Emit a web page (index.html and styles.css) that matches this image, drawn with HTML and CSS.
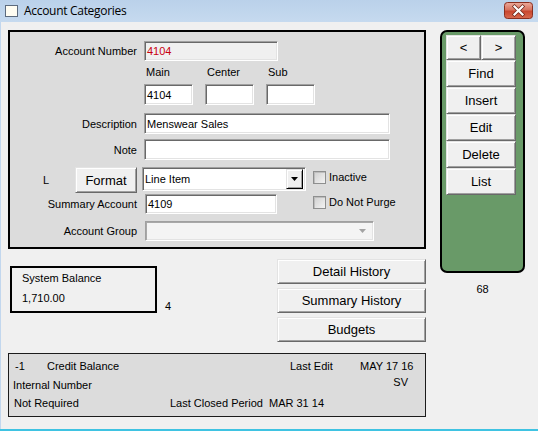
FILE: index.html
```html
<!DOCTYPE html>
<html>
<head>
<meta charset="utf-8">
<title>Account Categories</title>
<link rel="stylesheet" href="styles.css">
</head>
<body>
<div class="window">
  <div class="titlebar">
    <span class="app-icon"></span>
    <span class="title">Account Categories</span>
    <span class="close">
      <svg width="29" height="17" viewBox="0 0 29 17">
        <defs>
          <linearGradient id="cg" x1="0" y1="0" x2="0" y2="1">
            <stop offset="0" stop-color="#ecab9c"/>
            <stop offset="0.45" stop-color="#d7735f"/>
            <stop offset="0.55" stop-color="#c9472f"/>
            <stop offset="1" stop-color="#d86a4f"/>
          </linearGradient>
        </defs>
        <rect x="0.5" y="0.5" width="28" height="16" rx="3" fill="url(#cg)" stroke="#8a2f20"/>
        <path d="M10.5 4.5l8 8M18.5 4.5l-8 8" stroke="#6b2418" stroke-width="3.6" stroke-linecap="square"/>
        <path d="M10.5 4.5l8 8M18.5 4.5l-8 8" stroke="#ffffff" stroke-width="2.2" stroke-linecap="square"/>
      </svg>
    </span>
  </div>
  <div class="client">
    <div class="left">
      <div class="main-panel">
        <div class="row r1">
          <span class="lbl">Account Number</span>
          <span class="field disabled acct">4104</span>
        </div>
        <div class="mcs mcs-labels">
          <span class="mcs-cell">Main</span>
          <span class="mcs-cell">Center</span>
          <span class="mcs-cell">Sub</span>
        </div>
        <div class="mcs mcs-fields">
          <span class="field mcs-cell">4104</span>
          <span class="field mcs-cell"></span>
          <span class="field mcs-cell"></span>
        </div>
        <div class="row r4">
          <span class="lbl">Description</span>
          <span class="field wide">Menswear Sales</span>
        </div>
        <div class="row r5">
          <span class="lbl">Note</span>
          <span class="field wide"></span>
        </div>
        <div class="row r6">
          <span class="fmt-l">L</span>
          <span class="btn fmt-btn">Format</span>
          <span class="combo line-combo">Line Item
            <span class="drop"><svg width="7" height="4" viewBox="0 0 7 4"><path d="M0 0h7L3.5 4z" fill="#000"/></svg></span>
          </span>
          <span class="chk chk-inactive"><span class="box"></span>Inactive</span>
        </div>
        <div class="row r7">
          <span class="lbl">Summary Account</span>
          <span class="field summary">4109</span>
          <span class="chk chk-purge"><span class="box"></span>Do Not Purge</span>
        </div>
        <div class="row r8">
          <span class="lbl">Account Group</span>
          <span class="combo group-combo"><svg width="7" height="4" viewBox="0 0 7 4"><path d="M0 0h7L3.5 4z" fill="#a3a3a3"/></svg></span>
        </div>
      </div>

      <div class="mid">
        <div class="sysbal">
          <div>System Balance</div>
          <div>1,710.00</div>
        </div>
        <span class="four">4</span>
        <div class="hist">
          <span class="btn">Detail History</span>
          <span class="btn">Summary History</span>
          <span class="btn">Budgets</span>
        </div>
      </div>

      <div class="info">
        <div class="info-row ir1">
          <span class="c-neg">-1</span>
          <span class="c-credit">Credit Balance</span>
          <span class="c-edit">Last Edit</span>
          <span>MAY 17 16</span>
        </div>
        <div class="info-row ir2">
          <span class="c-internal">Internal Number</span>
          <span class="c-sv">SV</span>
        </div>
        <div class="info-row ir3">
          <span class="c-notreq">Not Required</span>
          <span class="c-closed">Last Closed Period</span>
          <span>MAR 31 14</span>
        </div>
      </div>
    </div>

    <div class="right">
      <div class="nav">
        <div class="nav-arrows">
          <span class="btn nbtn">&lt;</span>
          <span class="btn nbtn">&gt;</span>
        </div>
        <span class="btn nav-btn">Find</span>
        <span class="btn nav-btn">Insert</span>
        <span class="btn nav-btn">Edit</span>
        <span class="btn nav-btn">Delete</span>
        <span class="btn nav-btn">List</span>
      </div>
      <div class="count">68</div>
    </div>
  </div>
</div>
</body>
</html>
```

FILE: styles.css
```css
* { box-sizing: border-box; }

html, body {
  margin: 0;
  padding: 0;
}

body {
  width: 538px;
  height: 431px;
  overflow: hidden;
  background: #f0f0f0;
  color: #000;
  font-family: "Liberation Sans", Arial, sans-serif;
  font-size: 11px;
}

.window {
  width: 538px;
  height: 431px;
  display: flex;
  flex-direction: column;
  border-bottom: 2px solid #3fc3e2;
}

/* ---------- title bar ---------- */
.titlebar {
  height: 22px;
  flex: none;
  display: flex;
  align-items: flex-start;
  background: linear-gradient(#bad1ea, #c6daef);
  padding-left: 5px;
}

.app-icon {
  width: 13px;
  height: 12px;
  margin-top: 5px;
  background: #fffdf2;
  border: 1px solid #5d6b7d;
}

.title {
  margin-left: 6px;
  margin-top: 2px;
  font-family: "Open Sans", "Noto Sans", sans-serif;
  font-size: 12px;
  letter-spacing: -0.3px;
  line-height: 17px;
}

.close {
  margin-left: auto;
  margin-right: 5px;
  margin-top: 2px;
  width: 29px;
  height: 17px;
  display: flex;
}

/* ---------- client ---------- */
.client {
  flex: 1;
  display: flex;
  gap: 14px;
  padding: 8px 0 0 7px;
  border-left: 1px solid #c2d7ee;
}

.left {
  width: 418px;
  flex: none;
  display: flex;
  flex-direction: column;
}

/* ---------- main panel ---------- */
.main-panel {
  height: 219px;
  border: 2px solid #000;
  background: #dcdcdc;
  padding-top: 9px;
  display: flex;
  flex-direction: column;
}

.row {
  display: flex;
  align-items: center;
}

.lbl {
  width: 127px;
  flex: none;
  text-align: right;
}

.field {
  display: flex;
  align-items: center;
  padding-left: 2px;
  background: #fff;
  border: 1px solid;
  border-color: #a0a0a0 #fff #fff #a0a0a0;
  box-shadow: inset 1px 1px 0 #696969, inset -1px -1px 0 #e3e3e3;
  white-space: nowrap;
  overflow: hidden;
}

.field.disabled { background: #f0f0f0; }

.r1 { height: 20px; }
.r1 .field { height: 20px; }
.acct { margin-left: 7px; width: 134px; color: #c8000f; }

.mcs {
  display: flex;
  gap: 12px;
  margin-left: 134px;
}

.mcs-cell { width: 49px; flex: none; }

.mcs-labels {
  height: 23px;
  line-height: 23px;
}
.mcs-labels .mcs-cell { padding-left: 2px; }

.mcs-fields { height: 21px; }
.mcs-fields .field { height: 21px; }

.r4 { margin-top: 8px; height: 21px; }
.r5 { margin-top: 5px; height: 21px; }
.wide { margin-left: 7px; width: 246px; height: 21px; }

.r6 {
  margin-top: 7px;
  height: 26px;
  align-items: flex-start;
}

.fmt-l {
  width: 32px;
  margin-left: 33px;
  line-height: 26px;
}

.btn {
  display: flex;
  align-items: center;
  justify-content: center;
  background: #f0f0f0;
  border: 1px solid;
  border-color: #e3e3e3 #696969 #696969 #e3e3e3;
  box-shadow: inset 1px 1px 0 #fff, inset -1px -1px 0 #a0a0a0;
  font-size: 13px;
  white-space: nowrap;
}

.fmt-btn {
  width: 62px;
  height: 26px;
}

.combo {
  display: flex;
  align-items: center;
  border: 1px solid;
  border-color: #a0a0a0 #fff #fff #a0a0a0;
  box-shadow: inset 1px 1px 0 #696969, inset -1px -1px 0 #e3e3e3;
}

.line-combo {
  margin-left: 5px;
  width: 164px;
  height: 24px;
  background: #fff;
  padding: 2px 2px 2px 2px;
}

.drop {
  margin-left: auto;
  width: 17px;
  height: 20px;
  display: flex;
  align-items: center;
  justify-content: center;
  background: #f0f0f0;
  border: 1px solid;
  border-color: #e3e3e3 #000 #000 #e3e3e3;
  box-shadow: inset 1px 1px 0 #fff, inset -1px -1px 0 #a0a0a0;
}

.chk {
  display: flex;
  align-items: center;
  gap: 3px;
  line-height: 13px;
}

.box {
  width: 13px;
  height: 13px;
  flex: none;
  border: 1px solid #8e8f8f;
  background: linear-gradient(135deg, #cfcfcf, #f3f3f3);
  box-shadow: inset 1px 1px 0 #bdbdbd;
}

.chk-inactive { margin-left: 7px; margin-top: 4px; }

.r7 {
  margin-top: 1px;
  height: 20px;
  align-items: flex-start;
}
.r7 .lbl { line-height: 20px; }
.summary { margin-left: 8px; width: 132px; height: 20px; }
.chk-purge { margin-left: 36px; margin-top: 2px; }

.r8 { margin-top: 7px; height: 20px; }
.group-combo {
  margin-left: 8px;
  width: 229px;
  height: 20px;
  background: #f4f4f4;
  border-color: #a0a0a0 #fff #fff #a0a0a0;
  box-shadow: inset 1px 1px 0 #a8a8a8, inset -1px -1px 0 #e3e3e3;
  justify-content: flex-end;
  padding-right: 7px;
}

/* ---------- middle section ---------- */
.mid {
  display: flex;
  align-items: flex-start;
  margin-top: 10px;
  height: 84px;
}

.sysbal {
  margin-top: 7px;
  margin-left: 2px;
  width: 147px;
  height: 47px;
  border: 2px solid #000;
  padding-left: 10px;
  line-height: 20px;
}

.four {
  margin-left: 8px;
  margin-top: 41px;
  line-height: 13px;
}

.hist {
  margin-left: auto;
  width: 149px;
  display: flex;
  flex-direction: column;
  gap: 4px;
}
.hist .btn { height: 25px; }

/* ---------- info panel ---------- */
.info {
  margin-top: 10px;
  height: 64px;
  border: 1px solid #1c1c1c;
  background: #dcdcdc;
  padding-top: 4px;
}

.info-row {
  display: flex;
  align-items: flex-start;
  line-height: 16px;
  white-space: nowrap;
}

.ir1 { height: 16px; padding-left: 6px; }
.c-neg { width: 32px; }
.c-credit { width: 243px; }
.c-edit { width: 70px; }

.ir2 { height: 19px; }
.c-internal { margin-left: 4px; margin-top: 3px; }
.c-sv { margin-left: auto; margin-right: 17px; }

.ir3 { margin-top: 2px; height: 16px; }
.c-notreq { margin-left: 5px; width: 156px; }
.c-closed { width: 99px; }

/* ---------- right nav panel ---------- */
.right {
  width: 85px;
  flex: none;
  display: flex;
  flex-direction: column;
}

.nav {
  height: 243px;
  border: 2px solid #000;
  border-radius: 7px;
  background: #699a68;
  padding: 3px 7px 0 4px;
  display: flex;
  flex-direction: column;
}

.nav-arrows {
  display: flex;
  height: 25px;
}

.nbtn { width: 35px; height: 25px; }

.nav-btn { width: 70px; height: 27px; }

.count {
  margin-top: 10px;
  text-align: center;
  line-height: 13px;
}
```
